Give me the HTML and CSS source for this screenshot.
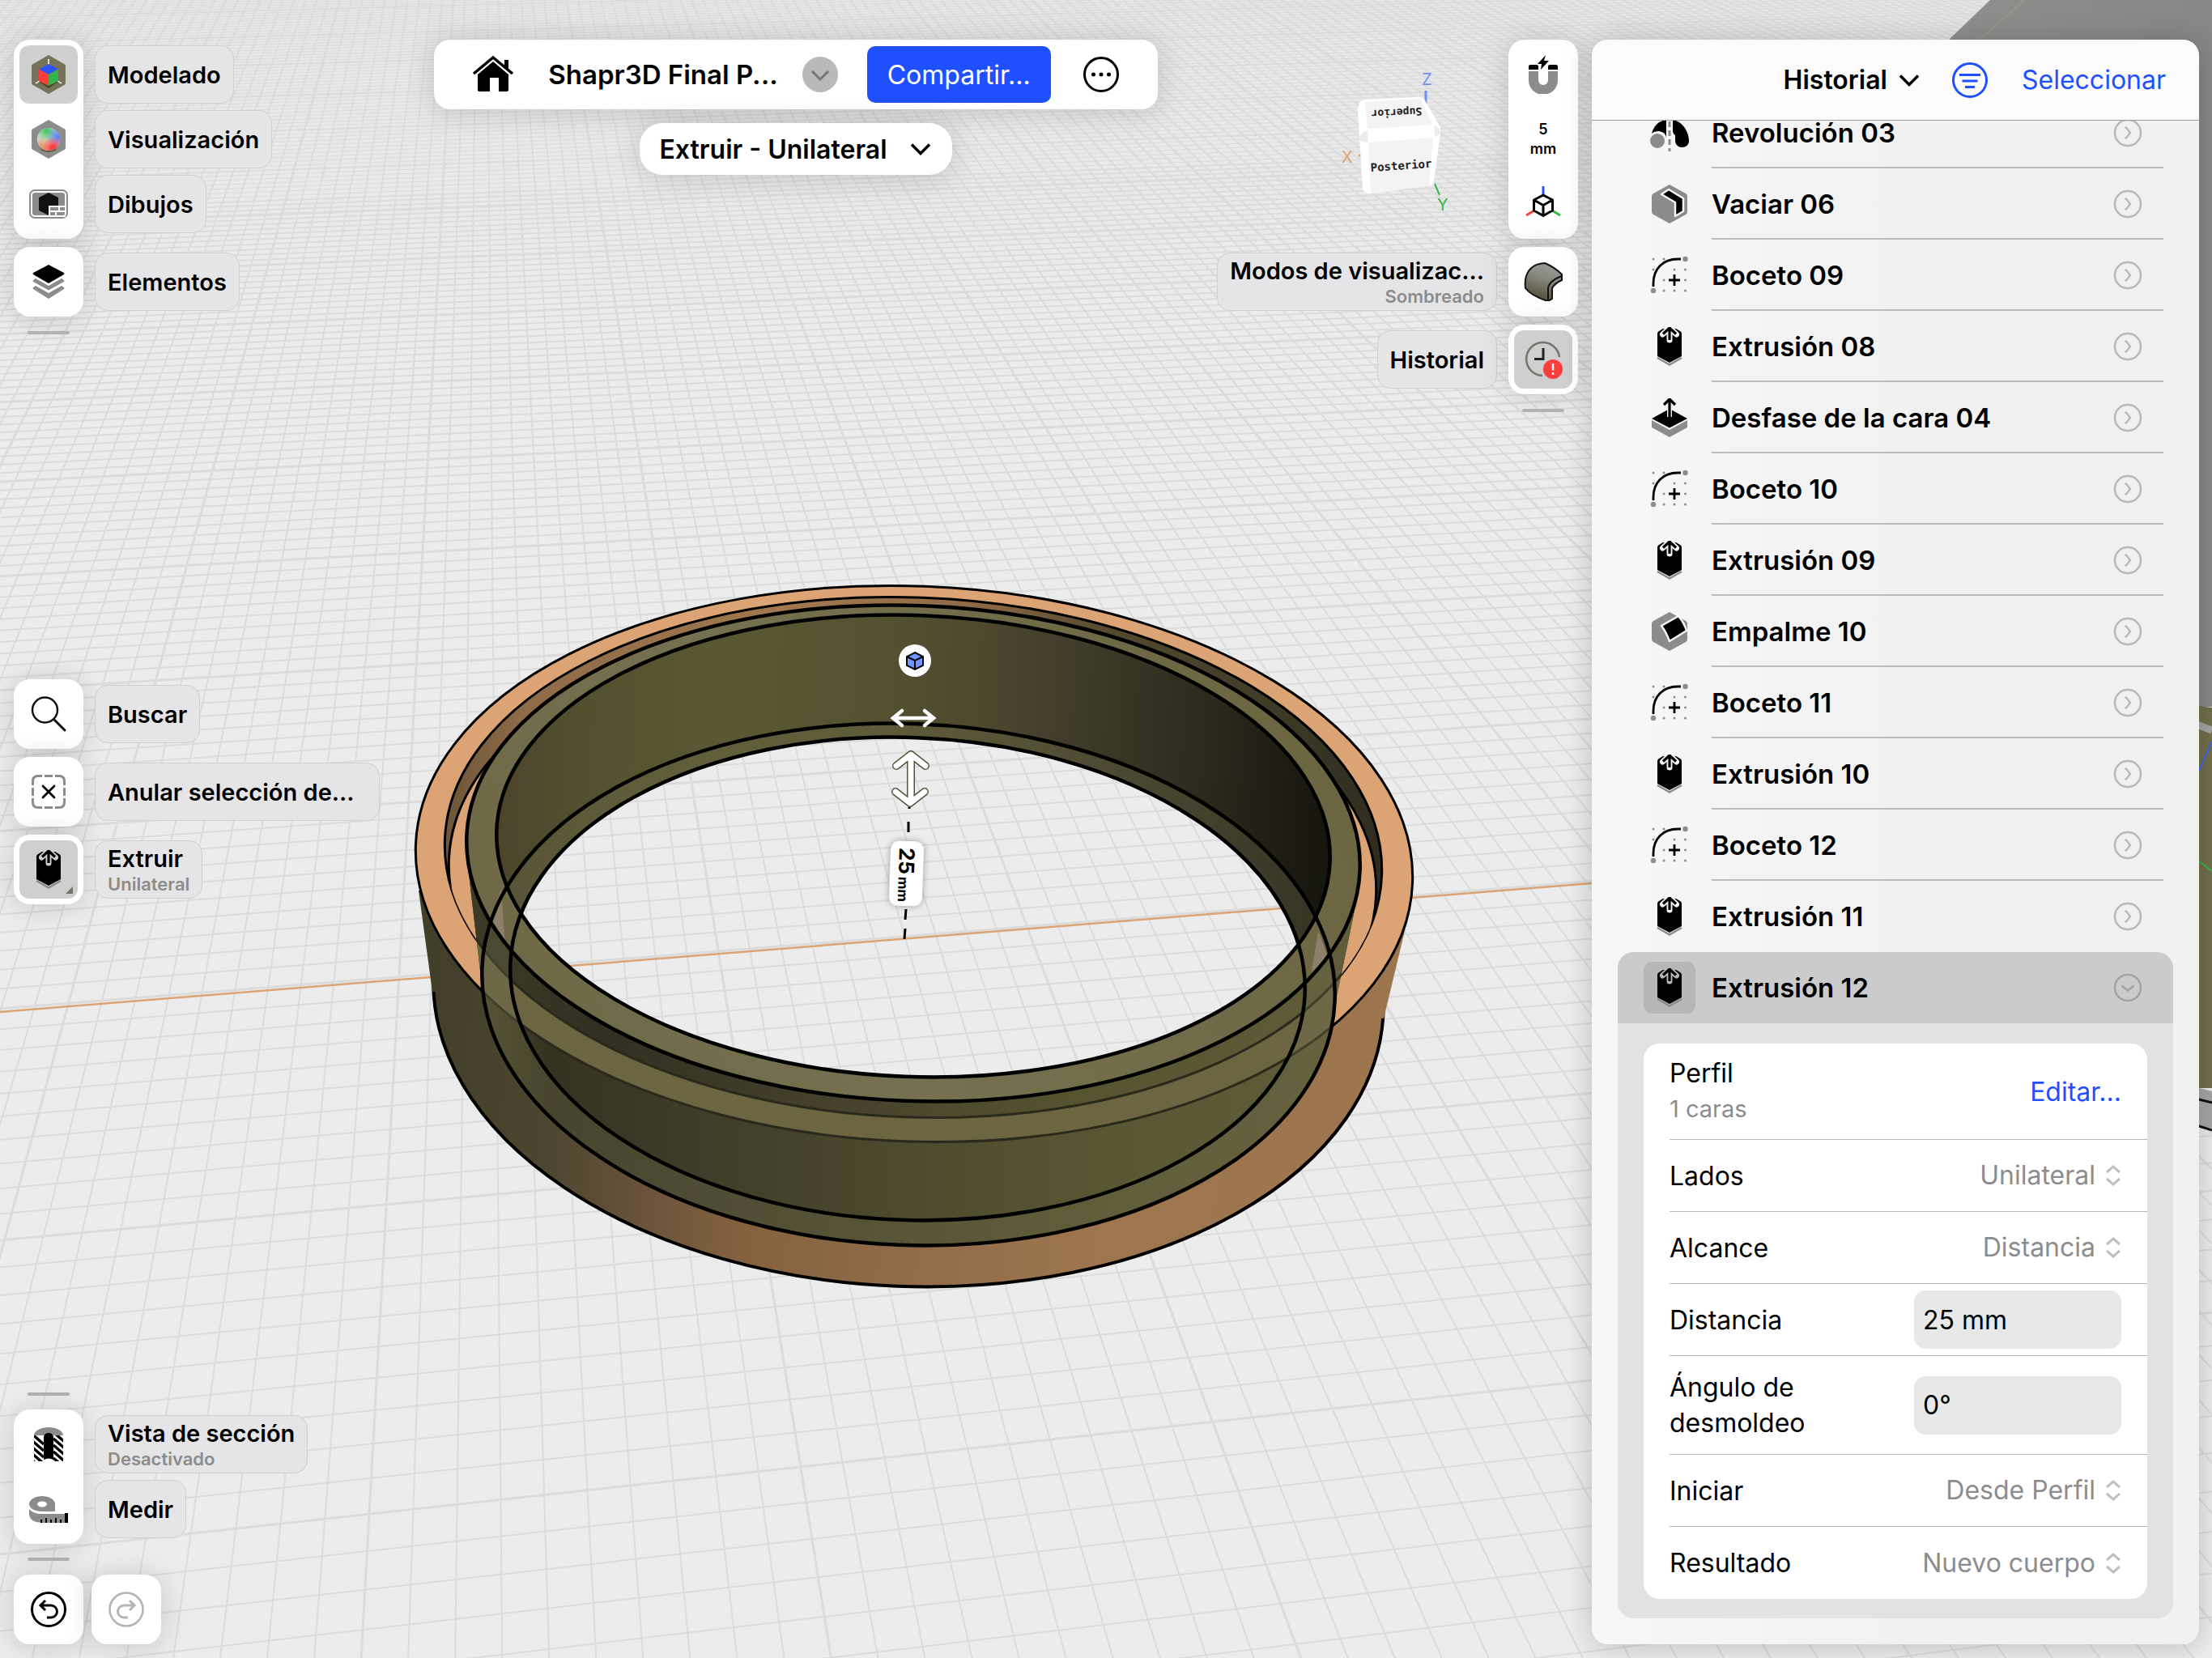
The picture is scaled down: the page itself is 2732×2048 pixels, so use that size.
FILE: index.html
```html
<!DOCTYPE html>
<html lang="es">
<head>
<meta charset="utf-8">
<meta name="viewport" content="width=device-width, initial-scale=1">
<title>Shapr3D Final P...</title>
<link rel="stylesheet" href="styles.css">
<script src="grid.js" defer></script>
</head>
<body>
<svg class="sprite" aria-hidden="true">
  <symbol id="i-extrude" viewBox="0 0 48 48">
    <path d="M9 8q0-2 2-3l5-3h16l5 3q2 1 2 3v28l-15 8-15-8z" fill="#000"/>
    <path d="M9 38l15 8.500L39 38" fill="none" stroke="#8c8c8c" stroke-width="2.500"/>
    <path d="M15.500 9L24 1l8.500 8M24 2v14" fill="none" stroke="var(--halo)" stroke-width="7" stroke-linejoin="round" stroke-linecap="round"/>
    <path d="M16 8.500l8-7.500 8 7.500M24 2v14" fill="none" stroke="#000" stroke-width="3.200"/>
  </symbol>
  <symbol id="i-sketch" viewBox="0 0 48 48">
    <g fill="#8c8c8c">
      <circle cx="4" cy="4" r="1.500"/><circle cx="17" cy="4" r="1.500"/>
      <circle cx="4" cy="17" r="1.500"/><circle cx="30" cy="17" r="1.500"/><circle cx="43.500" cy="17" r="1.500"/>
      <circle cx="17" cy="30" r="1.500"/><circle cx="43.500" cy="30" r="1.500"/>
      <circle cx="17" cy="43" r="1.500"/><circle cx="30" cy="43" r="1.500"/><circle cx="43.500" cy="43" r="1.500"/>
      <circle cx="43.500" cy="4" r="3.200"/><circle cx="4" cy="43" r="3.200"/>
    </g>
    <path d="M4 38v-4C4 16 16 4 34 4h4M30 23v14M23 30h14" fill="none" stroke="#000" stroke-width="2.800"/>
  </symbol>
  <symbol id="i-shell" viewBox="0 0 48 48">
    <path d="M24 0l20 11q2 1 2 3v20q0 2-2 3L24 48 4 37q-2-1-2-3V14q0-2 2-3z" fill="#8c8c8c"/>
    <path d="M14 12l9-6 18 11v16l-10 6V22z" fill="#000" stroke="var(--halo)" stroke-width="2.500" stroke-linejoin="round"/>
  </symbol>
  <symbol id="i-fillet" viewBox="0 0 48 48">
    <path d="M24 0l20 11q2 1 2 3v20q0 2-2 3L24 48 4 37q-2-1-2-3V14q0-2 2-3z" fill="#8c8c8c"/>
    <path d="M14 17L35 5q7 8 10 18L24 36q-4-11-10-19z" fill="#000" stroke="var(--halo)" stroke-width="2.500" stroke-linejoin="round"/>
  </symbol>
  <symbol id="i-offset" viewBox="0 0 48 48">
    <path d="M2 27l22 12 22-12v9L24 48 2 36z" fill="#8c8c8c"/>
    <path d="M24 13l22 12-22 11.500L2 25z" fill="#000"/>
    <path d="M17 7l7-7 7 7M24 2v21" fill="none" stroke="var(--halo)" stroke-width="6"/>
    <path d="M17 8l7-7 7 7M24 2v21" fill="none" stroke="#000" stroke-width="3.200"/>
  </symbol>
  <symbol id="i-revolve" viewBox="0 0 48 48">
    <path d="M2 25C5 14 12 9 20 8v22q-1-7-9-8-6 0-9 3z" fill="#000"/>
    <circle cx="9" cy="34" r="9" fill="#8c8c8c"/>
    <path d="M28 8c13 2 20 16 20 26 0 5-4 8-8.500 8S31 39 31 33v-6q-3-2-3-6z" fill="#000"/>
    <path d="M24 10v37" stroke="#8c8c8c" stroke-width="3" stroke-dasharray="7 4"/>
  </symbol>
  <symbol id="i-next" viewBox="0 0 36 36">
    <circle cx="18" cy="18" r="16" fill="none" stroke="#b9b9ba" stroke-width="2.500"/>
    <path d="M15 10.500l6 7.500-6 7.500" fill="none" stroke="#b9b9ba" stroke-width="2.500"/>
  </symbol>
  <symbol id="i-open" viewBox="0 0 36 36">
    <circle cx="18" cy="18" r="16" fill="none" stroke="#a2a2a4" stroke-width="2.500"/>
    <path d="M10.500 15.500l7.500 6 7.500-6" fill="none" stroke="#a2a2a4" stroke-width="2.500"/>
  </symbol>
  <symbol id="i-step" viewBox="0 0 20 28">
    <path d="M2 10l8-7 8 7M2 18l8 7 8-7" fill="none" stroke="#c0c0c2" stroke-width="3"/>
  </symbol>
  <symbol id="i-chevron" viewBox="0 0 26 16">
    <path d="M2 2.500l11 11 11-11" fill="none" stroke="#000" stroke-width="3.500"/>
  </symbol>
</svg>

<main class="app">
  <svg class="scene" viewBox="0 0 2732 2048" preserveAspectRatio="xMidYMid slice" role="img" aria-label="Modelo 3D">
    <defs>
      <linearGradient id="sky" x1="0" y1="0" x2="0" y2="1"><stop offset="0" stop-color="#e6e6e6"/><stop offset=".2" stop-color="#ececec"/><stop offset="1" stop-color="#ececec"/></linearGradient>
      <linearGradient id="far" x1="0" y1="0" x2="1" y2="0"><stop offset="0" stop-color="#8e8e8c"/><stop offset="1" stop-color="#878787"/></linearGradient>
      <linearGradient id="g-side" gradientUnits="userSpaceOnUse" x1="513" y1="0" x2="1745" y2="0">
        <stop offset="0" stop-color="#403d29"/><stop offset=".07" stop-color="#47422c"/><stop offset=".14" stop-color="#4d462f"/><stop offset=".22" stop-color="#66503a"/><stop offset=".34" stop-color="#83623f"/><stop offset=".5" stop-color="#916c49"/><stop offset=".7" stop-color="#9d7650"/><stop offset="1" stop-color="#9c754f"/>
      </linearGradient>
      <linearGradient id="g-groove" gradientUnits="userSpaceOnUse" x1="550" y1="0" x2="1707" y2="0">
        <stop offset="0" stop-color="#6e5639"/><stop offset=".08" stop-color="#8f6b48"/><stop offset=".35" stop-color="#a1784f"/><stop offset=".55" stop-color="#8f6b48"/><stop offset=".7" stop-color="#55492f"/><stop offset=".85" stop-color="#413d29"/><stop offset="1" stop-color="#2f2c1f"/>
      </linearGradient>
      <linearGradient id="g-wall" gradientUnits="userSpaceOnUse" x1="613" y1="0" x2="1642" y2="0">
        <stop offset="0" stop-color="#4c452d"/><stop offset=".1" stop-color="#53502f"/><stop offset=".25" stop-color="#5a5734"/><stop offset=".45" stop-color="#545230"/><stop offset=".57" stop-color="#4e482e"/><stop offset=".7" stop-color="#3f3b29"/><stop offset=".84" stop-color="#2d2a1e"/><stop offset="1" stop-color="#16150e"/>
      </linearGradient>
      <linearGradient id="g-front" gradientUnits="userSpaceOnUse" x1="594" y1="0" x2="1650" y2="0">
        <stop offset="0" stop-color="#4a472d"/><stop offset=".08" stop-color="#35321f"/><stop offset=".25" stop-color="#3f3c29"/><stop offset=".5" stop-color="#4e4a2e"/><stop offset=".75" stop-color="#5a5734"/><stop offset="1" stop-color="#605c3a"/>
      </linearGradient>
      <linearGradient id="g-gap" gradientUnits="userSpaceOnUse" x1="594" y1="0" x2="1650" y2="0">
        <stop offset="0" stop-color="#3d3a27"/><stop offset=".15" stop-color="#322f22"/><stop offset=".45" stop-color="#47432c"/><stop offset=".7" stop-color="#565330"/><stop offset="1" stop-color="#605b38"/>
      </linearGradient>
      <linearGradient id="g-olive" gradientUnits="userSpaceOnUse" x1="576" y1="1361" x2="1680" y2="800">
        <stop offset="0" stop-color="#6c6644"/><stop offset=".4" stop-color="#757150"/><stop offset="1" stop-color="#6a6440"/>
      </linearGradient>
      <clipPath id="c-e2"><ellipse cx="1128" cy="1059" rx="579" ry="321" transform="rotate(2.200 1128 1059)"/></clipPath>
      <clipPath id="c-e5"><ellipse cx="1128" cy="1045" rx="515" ry="285" transform="rotate(2.200 1128 1045)"/></clipPath>
      <clipPath id="c-hull">
        <ellipse cx="1128" cy="1054" rx="552" ry="306" transform="rotate(2.200 1128 1054)"/>
        <ellipse cx="1122" cy="1216" rx="527" ry="322" transform="rotate(2.200 1122 1216)"/>
        <path d="M578 1070L1678 1100 1647 1250 596 1225z"/>
      </clipPath>
      <mask id="m-hole" maskUnits="userSpaceOnUse" x="0" y="0" width="2732" height="2048">
        <rect width="2732" height="2048" fill="#fff"/>
        <g clip-path="url(#c-e5)"><ellipse cx="1121" cy="1209" rx="491" ry="298" transform="rotate(2.200 1121 1209)" fill="#000"/></g>
      </mask>
      <mask id="m-ring" maskUnits="userSpaceOnUse" x="0" y="0" width="2732" height="2048">
        <rect width="2732" height="2048" fill="#fff"/>
        <ellipse cx="1121" cy="1209" rx="491" ry="298" transform="rotate(2.200 1121 1209)" fill="#000"/>
      </mask>
    </defs>
    <rect width="2732" height="2048" fill="url(#sky)"/>
    <g id="grid" stroke="#dcdcdc"></g>
    <path d="M0 1250L2732 1029" stroke="#dca474" stroke-width="2.500"/>

    <!-- neighbouring body behind the history panel -->
    <path d="M2458 0h274v873h-120V300L2408 48z" fill="url(#far)"/>
    <path d="M2500 0L2446 48" stroke="#96958c" stroke-width="2"/>
    <path d="M2612 860l120 14v470h-120z" fill="#716e4a"/>
    <path d="M2700 890l32 12" stroke="#a3a3a3" stroke-width="9"/>
    <path d="M2732 916l-16 36" stroke="#3c62ee" stroke-width="2"/>
    <path d="M2716 1064l16 12" stroke="#35b44a" stroke-width="2"/>
    <path d="M2700 1340l32 8v46l-32-6z" fill="#a6a6a6"/>
    <path d="M2700 1354l32 8M2700 1386l32 10" stroke="#111" stroke-width="3"/>

    <g mask="url(#m-hole)">
      <ellipse cx="1122" cy="1228" rx="587" ry="361" transform="rotate(2.200 1122 1228)" fill="url(#g-side)" stroke="#000" stroke-width="4"/>
      <path d="M517 1100L1741 1125 1709 1258 534 1225z" fill="url(#g-side)"/>
      <ellipse cx="1129" cy="1067" rx="616" ry="343" transform="rotate(2.200 1129 1067)" fill="#dca474" stroke="#000" stroke-width="3"/>
      <ellipse cx="1128" cy="1059" rx="579" ry="321" transform="rotate(2.200 1128 1059)" fill="url(#g-groove)" stroke="#000" stroke-width="3"/>
      <g clip-path="url(#c-e2)"><ellipse cx="1127" cy="1084" rx="573" ry="318" transform="rotate(2.200 1127 1084)" fill="#dca474" stroke="#000" stroke-width="3"/></g>
      <g clip-path="url(#c-hull)">
        <rect x="560" y="740" width="1140" height="810" fill="url(#g-front)"/>
        <ellipse cx="1129" cy="1067" rx="616" ry="343" transform="rotate(2.200 1129 1067)" fill="#6b6541" stroke="#2b291b" stroke-width="3"/>
        <ellipse cx="1128" cy="1059" rx="579" ry="321" transform="rotate(2.200 1128 1059)" fill="url(#g-gap)" stroke="#2b291b" stroke-width="3"/>
      </g>
      <g mask="url(#m-ring)"><ellipse cx="1122" cy="1216" rx="527" ry="322" transform="rotate(2.200 1122 1216)" fill="#757150" opacity=".3"/></g>
      <ellipse cx="1128" cy="1054" rx="552" ry="306" transform="rotate(2.200 1128 1054)" fill="url(#g-olive)"/>
      <ellipse cx="1128" cy="1045" rx="515" ry="285" transform="rotate(2.200 1128 1045)" fill="url(#g-wall)"/>
      <g clip-path="url(#c-e5)"><ellipse cx="1122" cy="1216" rx="527" ry="322" transform="rotate(2.200 1122 1216)" fill="#716d4b" opacity=".35"/></g>
      <path d="M619 1098L624 1170 612 1142 606 1138z" fill="#8d7f68"/>
      <path d="M1628 1150l-8 50 20-18z" fill="#8d7f68"/>
    </g>
    <g fill="none" stroke="#000" stroke-width="4.500">
      <ellipse cx="1128" cy="1054" rx="552" ry="306" transform="rotate(2.200 1128 1054)"/>
      <ellipse cx="1128" cy="1045" rx="515" ry="285" transform="rotate(2.200 1128 1045)"/>
      <ellipse cx="1122" cy="1216" rx="527" ry="322" transform="rotate(2.200 1122 1216)"/>
      <ellipse cx="1121" cy="1209" rx="491" ry="298" transform="rotate(2.200 1121 1209)"/>
    </g>

    <!-- manipulators and dimension -->
    <circle cx="1130" cy="816" r="20" fill="#fff"/>
    <path d="M1130 806l10 5v11l-10 5-10-5v-11z" fill="#7096ff" stroke="#000" stroke-width="2"/>
    <path d="M1120 811l10 5 10-5M1130 816v11" fill="none" stroke="#000" stroke-width="2"/>
    <path d="M1104 887h48M1114 878l-11 9 11 9M1142 878l11 9-11 9" fill="none" stroke="#fff" stroke-width="4.500" stroke-linecap="round"/>
    <g fill="none" stroke-linecap="round" stroke-linejoin="round">
      <path d="M1125 935v54M1107 946l18-14 18 14M1106 978l18 14 18-14" stroke="#55523a" stroke-width="10"/>
      <path d="M1125 935v54M1107 946l18-14 18 14M1106 978l18 14 18-14" stroke="#fff" stroke-width="7"/>
    </g>
    <path d="M1123 997v2M1122 1015v13M1119 1123l-1 13M1118 1147l-1 13" stroke="#000" stroke-width="3"/>
    <g transform="rotate(92 1120 1079)">
      <rect class="dim-pill" x="1080" y="1059" width="80" height="41" rx="10" fill="#fff"/>
      <text class="dim-text" x="1088" y="1089">25<tspan class="dim-unit" dx="3">mm</tspan></text>
    </g>

    <!-- orientation cube -->
    <path d="M1761 112v16" stroke="#6f8ff5" stroke-width="3"/>
    <path d="M1678 192h6" stroke="#dca474" stroke-width="3"/>
    <path d="M1772 227l6 14" stroke="#35b44a" stroke-width="2"/>
    <path d="M1686 123l66-3q6 0 8 4l17 30q3 4 2 10l-8 60q0 4-5 5l-74 10q-7 0-9-5l-6-96q0-14 9-15z" fill="#fff"/>
    <path d="M1686 126l68-4 16 32-81 5z" fill="#f3f3f3"/>
    <path d="M1690 176l80-6-5 60-72 8z" fill="#f3f3f3"/>
    <path d="M1678 171q4-9 11-10l1 15q-8 0-12-5zM1771 155q8 2 8 10l-7 4z" fill="#ececec"/>
    <text class="cube-text" x="1693" y="212" transform="rotate(-4 1693 212)">Posterior</text>
    <text class="cube-text small" x="1756" y="133" transform="rotate(177 1756 133)">Superior</text>
    <text class="axis-text" x="1756" y="105" fill="#6f8ff5">Z</text>
    <text class="axis-text" x="1657" y="201" fill="#dca474">X</text>
    <text class="axis-text" x="1775" y="260" fill="#35b44a">Y</text>
  </svg>

  <div class="stage">
    <nav class="left" aria-label="Herramientas">
      <div class="row">
        <div class="card">
          <button class="tool on" id="b-model" aria-labelledby="l-model"><svg viewBox="0 0 48 48"><path d="M24 0l20 11.500q1 1 1 2v21q0 1-1 2L24 48 4 36.500q-1-1-1-2v-21q0-1 1-2z" fill="#76735a"/><path d="M24 5v8M8 35l5-3M40 35l-5-3" stroke="#ddd" stroke-width="2"/><path d="M12 33l12 8 12-8-12-5z" fill="#4a472d"/><path d="M24 11l12 6.500L24 24l-12-6.500z" fill="#2b55fb"/><path d="M12 17.500L24 24v14l-12-6z" fill="#fb3e3c"/><path d="M36 17.500L24 24v14l12-6z" fill="#35b44a"/></svg></button>
          <button class="tool" aria-labelledby="l-vis"><svg viewBox="0 0 48 48"><defs><radialGradient id="s1" cx=".4" cy=".1" r=".6"><stop offset="0" stop-color="#3dc45a"/><stop offset="1" stop-color="#3dc45a" stop-opacity="0"/></radialGradient><radialGradient id="s2" cx=".95" cy=".4" r=".55"><stop offset="0" stop-color="#4f74fb"/><stop offset="1" stop-color="#4f74fb" stop-opacity="0"/></radialGradient><radialGradient id="s3" cx=".7" cy=".9" r=".5"><stop offset=".2" stop-color="#fb3e3c"/><stop offset="1" stop-color="#fb3e3c" stop-opacity="0"/></radialGradient><radialGradient id="s4" cx=".2" cy=".85" r=".5"><stop offset=".2" stop-color="#e2a473"/><stop offset="1" stop-color="#e2a473" stop-opacity="0"/></radialGradient></defs><path d="M24 0l20 11.500q1 1 1 2v21q0 1-1 2L24 48 4 36.500q-1-1-1-2v-21q0-1 1-2z" fill="#8c8c8c"/><ellipse cx="24" cy="35" rx="10" ry="5" fill="#5f5c44"/><circle cx="24" cy="24" r="14" fill="#e6e6ea"/><circle cx="24" cy="24" r="14" fill="url(#s1)"/><circle cx="24" cy="24" r="14" fill="url(#s2)"/><circle cx="24" cy="24" r="14" fill="url(#s4)"/><circle cx="24" cy="24" r="14" fill="url(#s3)"/></svg></button>
          <button class="tool" aria-labelledby="l-draw"><svg viewBox="0 0 48 48"><rect x="1" y="7" width="46" height="34" rx="6" fill="none" stroke="#8c8c8c" stroke-width="2"/><rect x="4" y="10" width="40" height="28" rx="3" fill="#8c8c8c"/><path d="M24 10l12 6v16l-12 6-12-6V16z" fill="#111"/><path d="M24 26h21v14H24z" fill="#fff"/><path d="M26 28h10v4H26zM38 28h6v4h-6zM26 34h6v4h-6zM34 34h10v2q0 2-2 2h-8z" fill="#8c8c8c"/></svg></button>
        </div>
        <div class="tags"><label id="l-model" class="tag" for="b-model">Modelado</label><span id="l-vis" class="tag">Visualización</span><span id="l-draw" class="tag">Dibujos</span></div>
      </div>
      <div class="row">
        <div class="card"><button class="tool" aria-labelledby="l-elem"><svg viewBox="0 0 48 48"><path d="M24 3l19 10q1 1 0 2L24 26 5 15q-1-1 0-2z" fill="#000"/><path d="M5 22l3-2 16 9 16-9 3 2q1 1 0 2L24 34.500 5 24q-1-1 0-2zM5 31l3-2 16 9 16-9 3 2q1 1 0 2L24 45 5 33q-1-1 0-2z" fill="#8c8c8c"/></svg></button></div>
        <div class="tags"><span id="l-elem" class="tag">Elementos</span></div>
      </div>
      <div class="handle first"></div>

      <div class="row mid">
        <div class="card"><button class="tool" aria-labelledby="l-find"><svg viewBox="0 0 48 48"><circle cx="19.500" cy="19" r="15.500" fill="none" stroke="#111" stroke-width="2.500"/><path d="M31 31l13 13" stroke="#111" stroke-width="3" stroke-linecap="round"/></svg></button></div>
        <div class="tags"><span id="l-find" class="tag">Buscar</span></div>
      </div>
      <div class="row">
        <div class="card"><button class="tool" aria-labelledby="l-desel"><svg viewBox="0 0 48 48"><path d="M16 4.500h-5q-6.500 0-6.500 6.500v5M19 4.500h10M32 4.500h5q6.500 0 6.500 6.500v5M43.500 19v10M43.500 32v5q0 6.500-6.500 6.500h-5M29 43.500H19M16 43.500h-5q-6.500 0-6.500-6.500v-5M4.500 29V19" fill="none" stroke="#8c8c8c" stroke-width="3"/><path d="M17 17l14 14M31 17L17 31" stroke="#000" stroke-width="2.800" stroke-linecap="round"/></svg></button></div>
        <div class="tags"><span id="l-desel" class="tag clip">Anular selección de...</span></div>
      </div>
      <div class="row">
        <div class="card"><button class="tool on" aria-labelledby="l-ext"><svg viewBox="0 0 48 48"><use href="#i-extrude"/></svg><svg class="corner" viewBox="0 0 10 10"><path d="M10 0v10H0z" fill="#76746a"/></svg></button></div>
        <div class="tags"><span id="l-ext" class="tag two">Extruir<small>Unilateral</small></span></div>
      </div>

      <div class="handle last"></div>
      <div class="row spaced">
        <div class="card">
          <button class="tool" aria-labelledby="l-sec"><svg viewBox="0 0 48 48"><ellipse cx="24" cy="13" rx="18" ry="10" fill="#8c8c8c"/><path d="M6 13h36v32H6z" fill="#fff"/><svg x="6" y="13" width="36" height="32" viewBox="6 13 36 32"><path d="M2 10l16 14M2 18l16 14M2 26l16 14M2 34l16 14M2 42l8 7M30 9l16 14M30 17l16 14M30 25l16 14M30 33l16 14M30 41l8 7" stroke="#000" stroke-width="3.500"/></svg><path d="M18 15q1-5 6-5t6 5v28q-6-3-12 0z" fill="#000"/></svg></button>
          <button class="tool" aria-labelledby="l-med"><svg viewBox="0 0 48 48"><path d="M0 18C0 12 8 8 16 8s16 4 16 10v9H16C7 27 0 23 0 18zM0 24q5 6 16 6h28v11H16Q0 40 0 30z" fill="#8c8c8c"/><ellipse cx="16" cy="18" rx="6" ry="3.500" fill="#fff"/><path d="M44 29h4v12h-4zM14 37h2v4h-2zM20 35h2v6h-2zM26 37h2v4h-2zM32 35h2v6h-2zM38 37h2v4h-2z" fill="#000"/></svg></button>
        </div>
        <div class="tags"><span id="l-sec" class="tag two">Vista de sección<small>Desactivado</small></span><span id="l-med" class="tag">Medir</span></div>
      </div>
      <div class="handle spaced"></div>
      <div class="row undo spaced">
        <div class="card"><button class="tool" aria-label="Deshacer"><svg viewBox="0 0 48 48"><circle cx="24" cy="24" r="20.500" fill="none" stroke="#000" stroke-width="3"/><path d="M20 13l-6 6 6 6M14 19h13a7 7 0 0 1 0 15h-5" fill="none" stroke="#000" stroke-width="3"/></svg></button></div>
        <div class="card"><button class="tool" aria-label="Rehacer"><svg viewBox="0 0 48 48"><circle cx="24" cy="24" r="20.500" fill="none" stroke="#b4b4b4" stroke-width="2.500"/><path d="M28 13l6 6-6 6M34 19H21a7 7 0 0 0 0 15h5" fill="none" stroke="#b4b4b4" stroke-width="3"/></svg></button></div>
      </div>
    </nav>

    <header class="center">
      <div class="titlebar">
        <button class="plain" aria-label="Inicio"><svg class="home" viewBox="0 0 52 48"><path d="M7 24L26 8l19 16v19q0 2-2 2H33V28H22v17H10q-3 0-3-2z" fill="#000"/><path d="M2 23L26 3l24 20" fill="none" stroke="#000" stroke-width="3.500"/><path d="M40 6h5v14l-5-4z" fill="#000"/></svg></button>
        <button class="plain name">Shapr3D Final P...</button>
        <button class="plain" aria-label="Opciones del archivo"><svg class="round" viewBox="0 0 44 44"><circle cx="22" cy="22" r="22" fill="#b9b9bb"/><path d="M12 18l10 10 10-10" fill="none" stroke="#77756c" stroke-width="3"/></svg></button>
        <button class="share">Compartir...</button>
        <button class="plain" aria-label="Más"><svg class="round" viewBox="0 0 44 44"><circle cx="22" cy="22" r="20.500" fill="none" stroke="#000" stroke-width="3"/><circle cx="12.500" cy="22" r="2.500"/><circle cx="22" cy="22" r="2.500"/><circle cx="31.500" cy="22" r="2.500"/></svg></button>
      </div>
      <button class="mode">Extruir - Unilateral<svg class="chev" viewBox="0 0 26 16"><use href="#i-chevron"/></svg></button>
    </header>

    <nav class="right" aria-label="Vista">
      <div class="row">
        <div class="card">
          <button class="tool" aria-label="Imán"><svg viewBox="0 0 48 48"><path d="M6 20h12v11a6 6 0 0 0 12 0V20h12v11a18 18 0 0 1-36 0z" fill="#8c8c8c"/><path d="M6 18v-4q0-2 2-2h8q2 0 2 2v4zM30 18v-4q0-2 2-2h8q2 0 2 2v4z"/><path d="M27 0L17 11h5l-1 7 10-11h-6z"/></svg></button>
          <button class="tool unit">5<br>mm</button>
          <button class="tool" aria-label="Ejes"><svg viewBox="0 0 48 48"><path d="M24 2v11" stroke="#2b55fb" stroke-width="3"/><path d="M13 32L3 38" stroke="#fb3e3c" stroke-width="3"/><path d="M35 32l10 6" stroke="#35b44a" stroke-width="3"/><path d="M24 13l11.500 6v13L24 38.500 12.500 32V19zM12.500 19L24 25.500 35.500 19M24 25.500v13" fill="none" stroke="#000" stroke-width="3" stroke-linejoin="round"/></svg></button>
        </div>
      </div>
      <div class="row">
        <div class="tags"><span id="l-modes" class="tag two">Modos de visualizac...<small>Sombreado</small></span></div>
        <div class="card"><button class="tool" aria-labelledby="l-modes"><svg viewBox="0 0 48 48"><defs><linearGradient id="shade" x1=".6" y1="0" x2=".3" y2="1"><stop offset="0" stop-color="#9a9a9a"/><stop offset=".4" stop-color="#87867c"/><stop offset="1" stop-color="#4b4830"/></linearGradient></defs><path d="M3 17Q8 2 26 1q12 5 21 14v7q-9 4-12 10v13l-5 3Q10 42 2 32q-1-9 1-15z" fill="url(#shade)" stroke="#111" stroke-width="2"/><path d="M47 17q-16 6-17 15v15" fill="none" stroke="#111" stroke-width="2"/></svg></button></div>
      </div>
      <div class="row">
        <div class="tags"><span id="l-hist" class="tag">Historial</span></div>
        <div class="card"><button class="tool on" aria-labelledby="l-hist"><svg viewBox="0 0 48 48"><path d="M44 21A20.500 20.500 0 1 0 23 44" fill="none" stroke="#77756a" stroke-width="2.500"/><path d="M24 10v13.500H13" fill="none" stroke="#222" stroke-width="3"/><circle cx="36" cy="36" r="12" fill="#fb3e3c"/><path d="M36 29v8.500M36 40v3" stroke="#fff" stroke-width="2.500"/></svg></button></div>
      </div>
      <div class="handle first"></div>
    </nav>
  </div>

  <aside class="panel">
    <header class="panel-head">
      <button class="plain title">Historial<svg class="chev" viewBox="0 0 26 16"><use href="#i-chevron"/></svg></button>
      <button class="plain" aria-label="Filtrar"><svg class="filter" viewBox="0 0 44 44"><circle cx="22" cy="22" r="20.500" fill="none" stroke="#1f50ff" stroke-width="3"/><path d="M9 15.500h26M12.500 23h19M16 30.500h12" stroke="#1f50ff" stroke-width="3"/></svg></button>
      <button class="plain link">Seleccionar</button>
    </header>
    <div class="scroll">
      <ul class="steps">
        <li><button class="step"><svg class="ico"><use href="#i-revolve"/></svg><span class="label">Revolución 03<svg class="go"><use href="#i-next"/></svg></span></button></li>
        <li><button class="step"><svg class="ico"><use href="#i-shell"/></svg><span class="label">Vaciar 06<svg class="go"><use href="#i-next"/></svg></span></button></li>
        <li><button class="step"><svg class="ico"><use href="#i-sketch"/></svg><span class="label">Boceto 09<svg class="go"><use href="#i-next"/></svg></span></button></li>
        <li><button class="step"><svg class="ico"><use href="#i-extrude"/></svg><span class="label">Extrusión 08<svg class="go"><use href="#i-next"/></svg></span></button></li>
        <li><button class="step"><svg class="ico"><use href="#i-offset"/></svg><span class="label">Desfase de la cara 04<svg class="go"><use href="#i-next"/></svg></span></button></li>
        <li><button class="step"><svg class="ico"><use href="#i-sketch"/></svg><span class="label">Boceto 10<svg class="go"><use href="#i-next"/></svg></span></button></li>
        <li><button class="step"><svg class="ico"><use href="#i-extrude"/></svg><span class="label">Extrusión 09<svg class="go"><use href="#i-next"/></svg></span></button></li>
        <li><button class="step"><svg class="ico"><use href="#i-fillet"/></svg><span class="label">Empalme 10<svg class="go"><use href="#i-next"/></svg></span></button></li>
        <li><button class="step"><svg class="ico"><use href="#i-sketch"/></svg><span class="label">Boceto 11<svg class="go"><use href="#i-next"/></svg></span></button></li>
        <li><button class="step"><svg class="ico"><use href="#i-extrude"/></svg><span class="label">Extrusión 10<svg class="go"><use href="#i-next"/></svg></span></button></li>
        <li><button class="step"><svg class="ico"><use href="#i-sketch"/></svg><span class="label">Boceto 12<svg class="go"><use href="#i-next"/></svg></span></button></li>
        <li><button class="step"><svg class="ico"><use href="#i-extrude"/></svg><span class="label">Extrusión 11<svg class="go"><use href="#i-next"/></svg></span></button></li>
      </ul>
      <section class="current">
        <button class="step active"><span class="ico-box"><svg class="ico"><use href="#i-extrude"/></svg></span><span class="label">Extrusión 12<svg class="go"><use href="#i-open"/></svg></span></button>
        <form class="props">
          <div class="prop tall"><span>Perfil<small>1 caras</small></span><button type="button" class="plain link">Editar...</button></div>
          <div class="prop"><label for="lados">Lados</label><span class="pick"><select id="lados"><option>Unilateral</option></select><svg><use href="#i-step"/></svg></span></div>
          <div class="prop"><label for="alcance">Alcance</label><span class="pick"><select id="alcance"><option>Distancia</option></select><svg><use href="#i-step"/></svg></span></div>
          <div class="prop"><label for="dist">Distancia</label><input id="dist" type="text" value="25 mm"></div>
          <div class="prop wide"><label for="ang">Ángulo de desmoldeo</label><input id="ang" type="text" value="0°"></div>
          <div class="prop"><label for="ini">Iniciar</label><span class="pick"><select id="ini"><option>Desde Perfil</option></select><svg><use href="#i-step"/></svg></span></div>
          <div class="prop"><label for="res">Resultado</label><span class="pick"><select id="res"><option>Nuevo cuerpo</option></select><svg><use href="#i-step"/></svg></span></div>
        </form>
      </section>
    </div>
  </aside>
</main>
</body>
</html>
```
FILE: styles.css
```css
* { box-sizing: border-box; }
:root { --halo: #f5f5f5; --blue: #1f50ff; --grey: #8c8c8f; }
body { margin: 0; font-family: Inter, "Liberation Sans", sans-serif; color: #000; background: #ececec; }
button, input, select { font: inherit; color: inherit; border: 0; background: none; padding: 0; margin: 0; }
.sprite { display: none; }

.app { position: relative; display: grid; grid-template-columns: minmax(0, 1fr) 750px; padding: 49px 16px 17px 0; height: 100vh; overflow: hidden; }
.scene { position: absolute; inset: 0; width: 100%; height: 100%; }
.dim-pill { filter: drop-shadow(0 0 4px rgba(0, 0, 0, .35)); }
.dim-text { font-size: 26px; font-weight: 700; }
.dim-unit { font-size: 17px; }
.cube-text { font-family: "DejaVu Sans Mono", monospace; font-weight: 700; font-size: 14px; fill: #222; }
.cube-text.small { font-size: 13px; }
.axis-text { font-size: 20px; }

/* floating tools */
.stage { position: relative; display: grid; grid-template-columns: minmax(0, 1fr) auto minmax(0, 1fr); padding: 0 17px; min-height: 0; }
.left, .right { display: flex; flex-direction: column; gap: 10px; }
.right { align-items: flex-end; }
.row { display: flex; gap: 14px; }
.row.undo { gap: 10px; }
.card { display: flex; flex-direction: column; gap: 8px; flex: none; width: 86px; padding: 7px; align-self: flex-start; background: #fff; border-radius: 20px; box-shadow: 0 2px 36px rgba(0, 0, 0, .16); }
.tool { position: relative; display: flex; align-items: center; justify-content: center; width: 72px; height: 72px; border-radius: 12px; }
.tool.on { background: #cfcfd0; --halo: #cfcfd0; }
.tool > svg { width: 48px; height: 48px; }
.tool > .corner { position: absolute; right: 6px; bottom: 6px; width: 9px; height: 9px; }
.tool.unit { font-size: 18px; line-height: 24px; font-weight: 600; text-align: center; }
.tags { display: flex; flex-direction: column; align-items: flex-start; gap: 8px; padding: 7px 0; }
.right .tags { align-items: flex-end; }
.tag { display: flex; flex-direction: column; justify-content: center; height: 72px; padding: 2px 15px 0; font-size: 29px; line-height: 34px; font-weight: 600; white-space: nowrap; background: #e5e5e7; border: 1px solid #d0d0d2; border-radius: 16px; }
.tag.clip { padding-right: 30px; }
.tag small { font-size: 22px; line-height: 28px; font-weight: 600; color: #8c8c8a; }
.right .tag small { text-align: right; }
.handle { flex: none; width: 52px; height: 4px; border-radius: 2px; margin-left: 17px; background: #b2b2b3; }
.handle.first { margin-top: 8px; }
.right .handle { margin-right: 17px; }
.handle.last { margin-top: auto; }
.spaced { margin-top: 7px; }
.mid { margin-top: 416px; }

.center { display: flex; flex-direction: column; align-items: center; gap: 17px; }
.titlebar { display: flex; align-items: center; height: 86px; padding: 0 48px 0 47px; background: #fff; border-radius: 20px; box-shadow: 0 2px 36px rgba(0, 0, 0, .16); }
.plain { display: flex; align-items: center; }
.home { width: 52px; height: 48px; }
.name { margin: 0 30px 0 42px; font-size: 33px; font-weight: 600; white-space: nowrap; }
.round { width: 44px; height: 44px; }
.share { height: 70px; margin: 0 40px 0 36px; padding: 0 25px; background: var(--blue); color: #fff; font-size: 32px; border-radius: 10px; }
.mode { display: flex; align-items: center; gap: 28px; height: 64px; padding: 0 26px 0 24px; background: #fff; border-radius: 28px; font-size: 32px; font-weight: 600; white-space: nowrap; box-shadow: 0 2px 36px rgba(0, 0, 0, .16); }
.chev { width: 26px; height: 16px; }

/* history panel */
.panel { position: relative; display: flex; flex-direction: column; min-height: 0; background: linear-gradient(90deg, #f7f7f8, #f1f1f2 50%, #f1f1f2); border-radius: 20px; overflow: hidden; box-shadow: 0 2px 36px rgba(0, 0, 0, .2); }
.panel-head { display: flex; align-items: center; justify-content: flex-end; flex: none; height: 100px; padding-right: 41px; background: #fbfbfb; border-bottom: 1px solid #9c9c9e; }
.title { gap: 14px; font-size: 32px; font-weight: 600; }
.filter { width: 44px; height: 44px; margin: 0 42px 0 40px; }
.link { color: var(--blue); font-size: 32px; }
.scroll { flex: 1; min-height: 0; overflow: hidden; padding: 0 32px; }
.steps { list-style: none; margin: -29px 0 0; padding: 0; }
.step { display: flex; align-items: center; width: 100%; height: 88px; padding: 0 12px 0 40px; gap: 28px; text-align: left; font-size: 33px; font-weight: 600; }
.ico { width: 48px; height: 48px; flex: none; }
.label { display: flex; align-items: center; justify-content: space-between; flex: 1; height: 88px; padding: 2px 26px 0 0; border-bottom: 2px solid #bcbcbe; }
.go { width: 36px; height: 36px; flex: none; }
.steps li:last-child .label, .active .label { border-bottom-color: transparent; }
.current { background: #e2e2e2; border-radius: 20px; overflow: hidden; padding-bottom: 24px; }
.active { background: #cbcbcd; --halo: #b7b7ba; padding-left: 32px; gap: 20px; }
.ico-box { display: flex; align-items: center; justify-content: center; width: 64px; height: 64px; border-radius: 10px; background: #b7b7ba; }
.props { margin: 25px 32px 0; padding-left: 32px; background: #fff; border-radius: 20px; font-size: 32px; }
.prop { display: flex; align-items: center; justify-content: space-between; height: 89px; padding-right: 32px; border-bottom: 1px solid #b8b8ba; }
.prop:last-child { border-bottom: 0; }
.prop.tall { height: 119px; }
.prop.wide { height: 122px; }
.prop.wide label { width: 200px; line-height: 44px; }
.prop small { display: block; margin-top: 8px; font-size: 29px; line-height: 36px; color: var(--grey); }
.prop span { line-height: 36px; }
.pick { display: flex; align-items: center; gap: 12px; color: var(--grey); }
.pick select { appearance: none; text-align-last: right; }
.pick svg { width: 20px; height: 28px; }
.prop input { width: 256px; height: 72px; padding: 0 11px; background: #e8e8e8; border-radius: 14px; }
```
FILE: grid.js
```js
// Ground grid in perspective: two pencils of lines, each through its vanishing point.
(function () {
  var grid = document.getElementById('grid');
  var ns = 'http://www.w3.org/2000/svg';
  var vx = { x: 23040, y: -600 };
  var vy = { x: 596, y: -652 };

  function line(x1, y1, x2, y2, width) {
    var el = document.createElementNS(ns, 'line');
    el.setAttribute('x1', x1);
    el.setAttribute('y1', y1);
    el.setAttribute('x2', x2);
    el.setAttribute('y2', y2);
    el.setAttribute('stroke-width', width);
    grid.appendChild(el);
  }

  for (var k = -45; k < 150; k++) {
    var y = -643 + 1 / (0.0005348 + k * 0.00000703);
    var slope = (vx.y - y) / (vx.x - 240);
    var fade = y < 250 ? 1 : 2;
    line(0, y - 240 * slope, 2732, y + 2492 * slope, k % 10 === 0 ? fade + 1 : fade);
  }
  for (var j = -60; j < 170; j++) {
    var xb = 471 + 48.4 * j;
    var t = (0 - vy.y) / (1600 - vy.y);
    var b = (2048 - vy.y) / (1600 - vy.y);
    line(vy.x + (xb - vy.x) * t, 0, vy.x + (xb - vy.x) * b, 2048, j % 10 === 0 ? 3 : 2);
  }
})();
```
